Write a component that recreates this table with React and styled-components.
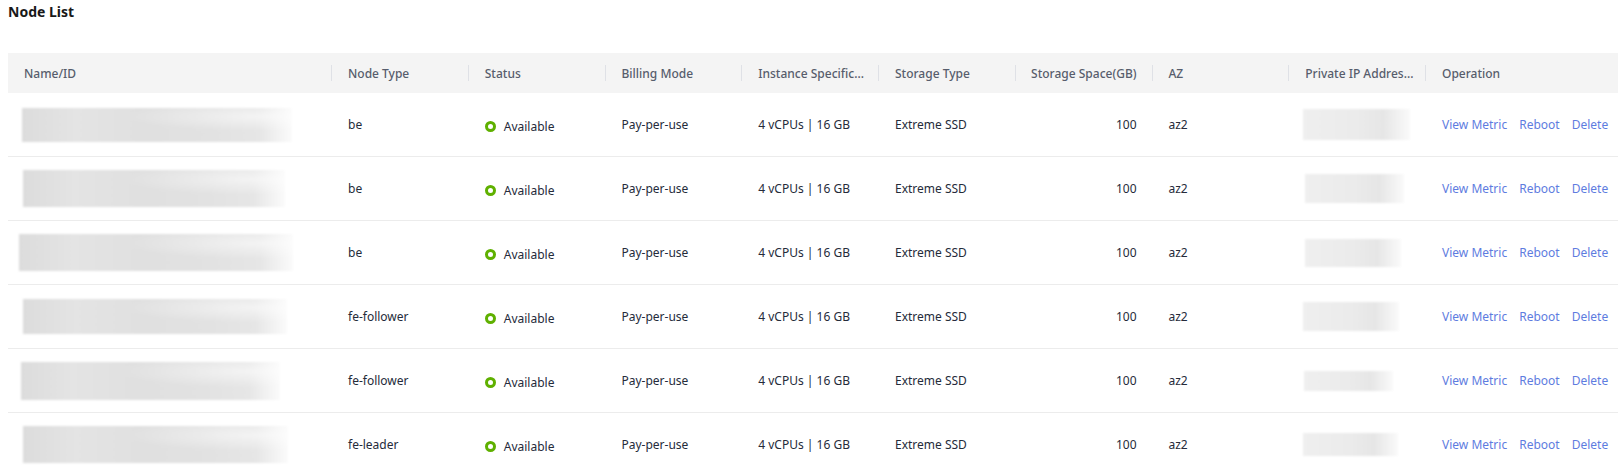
import React from "react";
import styled, { createGlobalStyle } from "styled-components";

const GlobalStyle = createGlobalStyle`
  html, body {
    margin: 0;
    padding: 0;
    background: #ffffff;
    overflow: hidden;
  }
  body {
    font-family: "Noto Sans", "Open Sans", Arial, sans-serif;
    color: #252b3a;
  }
`;

const Page = styled.div`
  padding: 0 0 0 8px;
  width: 1610px;
`;

const Title = styled.h3`
  margin: 0;
  padding-top: 3px;
  height: 50px;
  font-size: 14px;
  font-weight: 700;
  line-height: 18px;
  color: #191919;
`;

const COLS = "324px repeat(8, 136.75px) 1fr";

const HeadRow = styled.div`
  display: grid;
  grid-template-columns: ${COLS};
  height: 40px;
  background: #f4f4f4;
`;

const HeadCell = styled.div`
  position: relative;
  display: flex;
  align-items: center;
  justify-content: ${(p) => (p.right ? "flex-end" : "flex-start")};
  padding: 0 16px;
  font-size: 12px;
  font-weight: 500;
  color: #575d6c;
  white-space: nowrap;
  overflow: hidden;

  &::after {
    content: "";
    display: ${(p) => (p.last ? "none" : "block")};
    position: absolute;
    right: 0;
    top: 12px;
    width: 1px;
    height: 16px;
    background: #dfe1e6;
  }
`;

const Row = styled.div`
  display: grid;
  grid-template-columns: ${COLS};
  height: 63px;
  border-bottom: 1px solid #ececec;
`;

const Cell = styled.div`
  display: flex;
  align-items: center;
  justify-content: ${(p) => (p.right ? "flex-end" : "flex-start")};
  padding: ${(p) => (p.nudge ? "4px" : "0")} 16px 0 16px;
  font-size: 12px;
  color: #252b3a;
  white-space: nowrap;
`;

const NameCell = styled(Cell)`
  padding-left: ${(p) => p.$offset}px;
`;

const Blur = styled.div`
  width: ${(p) => p.$w}px;
  height: ${(p) => p.$h}px;
  margin-left: ${(p) => p.$ml || 0}px;
  background:
    radial-gradient(ellipse at 88% 25%, rgba(255, 255, 255, 0.55), transparent 40%),
    linear-gradient(90deg, #dcdcdc 0%, #e4e4e4 20%, #e0e0e0 45%, #e2e2e2 70%, #e6e6e6 88%, #fbfbfb 100%);
  filter: blur(1px);
`;

const IpBlur = styled(Blur)`
  background: linear-gradient(90deg, #efefef 0%, #ebebeb 50%, #e6e6e6 75%, #fafafa 100%);
`;

const Status = styled.span`
  display: inline-flex;
  align-items: center;
  gap: 8px;
`;

const Ring = styled.span`
  display: inline-block;
  width: 11px;
  height: 11px;
  box-sizing: border-box;
  border: 3px solid #5fb000;
  border-radius: 50%;
`;

const Ops = styled.div`
  display: flex;
  gap: 12px;
`;

const Link = styled.a`
  color: #5e7ce0;
  font-size: 12px;
  text-decoration: none;
  cursor: pointer;
`;

const headers = [
  { label: "Name/ID" },
  { label: "Node Type" },
  { label: "Status" },
  { label: "Billing Mode" },
  { label: "Instance Specific..." },
  { label: "Storage Type" },
  { label: "Storage Space(GB)", right: true },
  { label: "AZ" },
  { label: "Private IP Addres..." },
  { label: "Operation", last: true },
];

const nodes = [
  { type: "be", name: [270, 34, 14], ip: [108, 31, 14] },
  { type: "be", name: [262, 37, 15], ip: [99, 29, 16] },
  { type: "be", name: [274, 37, 11], ip: [96, 28, 16] },
  { type: "fe-follower", name: [264, 35, 15], ip: [96, 29, 14] },
  { type: "fe-follower", name: [259, 38, 13], ip: [89, 20, 15] },
  { type: "fe-leader", name: [265, 37, 15], ip: [95, 23, 14] },
];

export default function App() {
  return (
    <Page>
      <GlobalStyle />
      <Title>Node List</Title>
      <HeadRow>
        {headers.map((h) => (
          <HeadCell key={h.label} right={h.right} last={h.last}>
            {h.label}
          </HeadCell>
        ))}
      </HeadRow>
      {nodes.map((n, i) => (
        <Row key={i}>
          <NameCell $offset={n.name[2]}>
            <Blur $w={n.name[0]} $h={n.name[1]} />
          </NameCell>
          <Cell>{n.type}</Cell>
          <Cell nudge>
            <Status>
              <Ring />
              Available
            </Status>
          </Cell>
          <Cell>Pay-per-use</Cell>
          <Cell>4 vCPUs | 16 GB</Cell>
          <Cell>Extreme SSD</Cell>
          <Cell right>100</Cell>
          <Cell>az2</Cell>
          <Cell>
            <IpBlur $w={n.ip[0]} $h={n.ip[1]} $ml={n.ip[2] - 16} />
          </Cell>
          <Cell>
            <Ops>
              <Link>View Metric</Link>
              <Link>Reboot</Link>
              <Link>Delete</Link>
            </Ops>
          </Cell>
        </Row>
      ))}
    </Page>
  );
}
